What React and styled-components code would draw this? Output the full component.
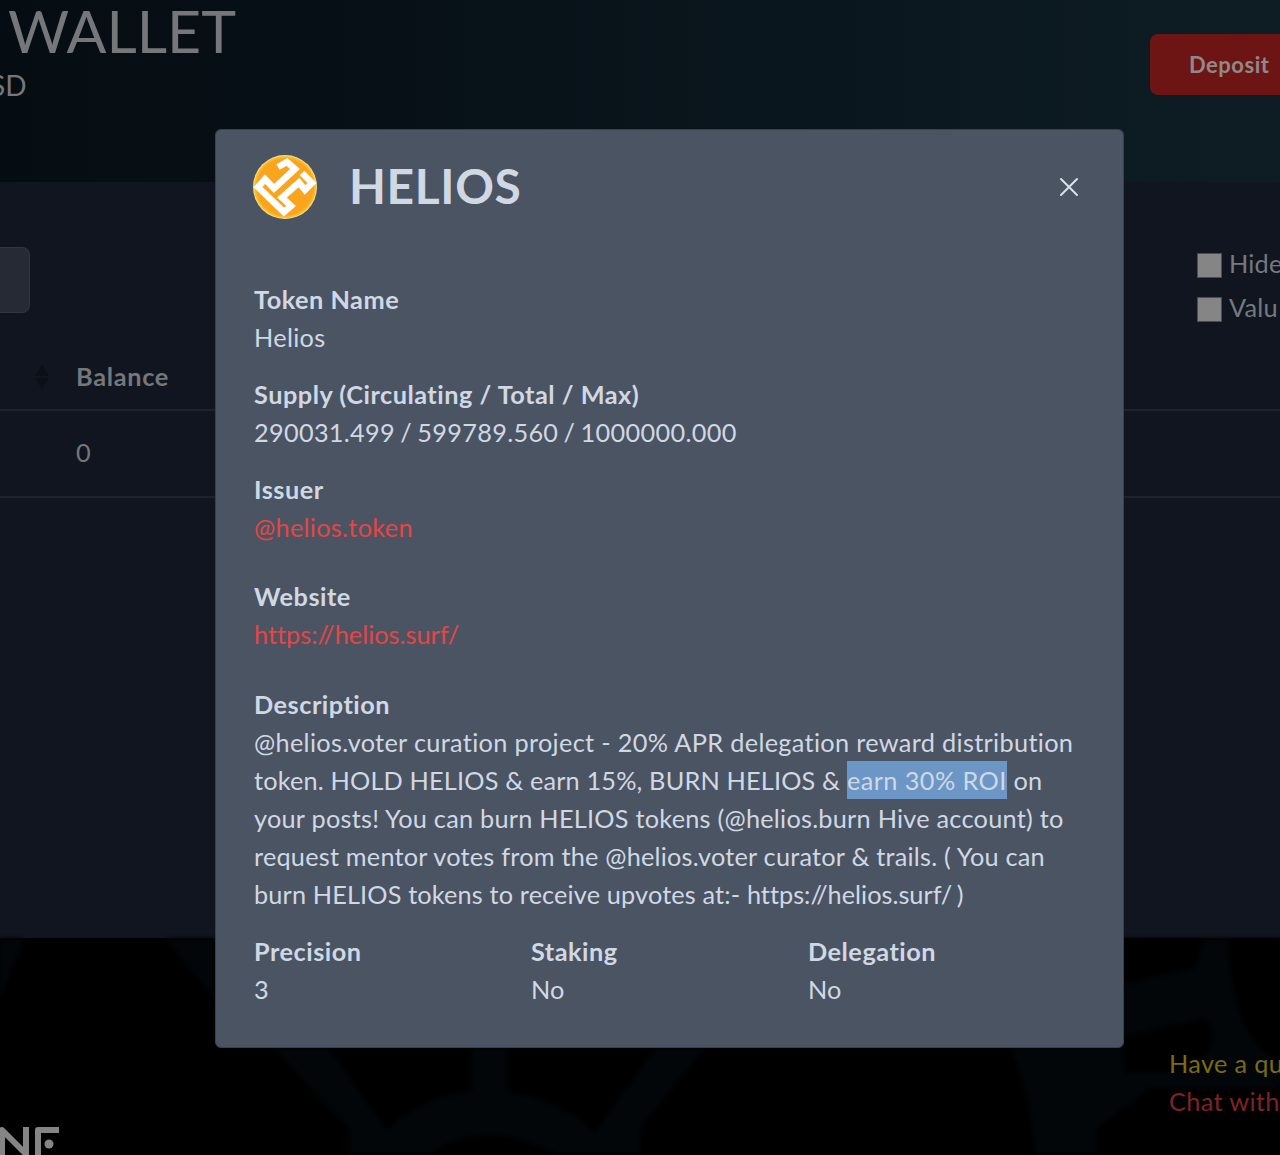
import React from 'react';
import styled, { createGlobalStyle } from 'styled-components';

const GlobalStyle = createGlobalStyle`
  body { margin: 0; overflow: hidden; }
  *, *::before, *::after { box-sizing: border-box; }
`;

const Page = styled.div`
  position: relative;
  width: 1280px;
  height: 1155px;
  overflow: hidden;
  background: #10151f;
  color: #75777b;
  font: 25.3px/38px Lato, sans-serif;
  font-variant-ligatures: none;
  white-space: nowrap;
`;

const Header = styled.header`
  display: flex;
  justify-content: space-between;
  height: 182px;
  background: linear-gradient(90deg, #060d12 0%, #071017 30%, #0c1a22 85%, #0e1c24 100%);
`;

const Heading = styled.div`
  display: flex;
  flex-direction: column;
`;

const Title = styled.h1`
  margin: -2px 0 2px 8px;
  font-size: 59px;
  line-height: 66px;
  font-weight: 400;
`;

const Currency = styled.div`
  margin-left: -10px;
  font-size: 28px;
`;

const DepositButton = styled.button`
  width: 170px;
  height: 61px;
  margin: 34px -40px 0 0;
  padding: 0 0 0 39px;
  border: 0;
  border-radius: 8px;
  background: #6d1515;
  color: #8f8a88;
  font: 700 22px/60px Lato, sans-serif;
  letter-spacing: 0.5px;
  text-align: left;
`;

const Main = styled.main`
  height: 756px;
`;

const Filters = styled.div`
  display: flex;
  justify-content: space-between;
  height: 174px;
  padding-top: 62px;
`;

const SearchBox = styled.div`
  width: 30px;
  height: 66px;
  margin-top: 3px;
  border: 1px solid #31363f;
  border-left: 0;
  border-radius: 0 8px 8px 0;
  background: #262a34;
`;

const Checks = styled.div`
  display: flex;
  flex-direction: column;
  gap: 6px;
  width: 83px;
`;

const Check = styled.label`
  display: flex;
  gap: 7px;
  color: #757980;
  letter-spacing: 0.2px;
`;

const CheckSquare = styled.span`
  flex: none;
  width: 25px;
  height: 25px;
  margin-top: 9px;
  border: 1px solid #4b4c50;
  background: #858585;
`;

const Row = styled.div`
  display: flex;
  align-items: center;
  height: ${({ $height }) => $height}px;
  padding-bottom: ${({ $head }) => ($head ? 14 : 4)}px;
  border-bottom: 2px solid #1d232d;
  font-weight: ${({ $head }) => ($head ? 700 : 400)};
  letter-spacing: ${({ $head }) => ($head ? 0.7 : 0)}px;
`;

const SortCell = styled.div`
  width: 76px;
  padding: 2px 0 0 35px;
  line-height: 0;
`;

const Footer = styled.footer`
  position: relative;
  height: 217px;
  background: #000;
`;

const Backdrop = styled.svg`
  position: absolute;
  inset: 0;
  filter: blur(2px);
`;

const FooterContent = styled.div`
  position: relative;
  display: flex;
  justify-content: space-between;
  height: 217px;
`;

const FooterLogo = styled.svg`
  align-self: flex-end;
`;

const Support = styled.div`
  width: 111px;
  padding-top: 106px;
  letter-spacing: 0.35px;
`;

const SupportLine = styled.div`
  color: ${({ $link }) => ($link ? '#7d2328' : '#7c6a14')};
`;

const Overlay = styled.div`
  position: absolute;
  inset: 0;
  display: flex;
  align-items: flex-start;
  padding: 129px 0 0 215px;
`;

const Modal = styled.div`
  width: 909px;
  height: 919px;
  padding: 24px 38px 0 37px;
  border: 1px solid #364252;
  border-radius: 6px;
  background: #4b5462;
  color: #d0d8e4;
`;

const ModalHeader = styled.div`
  display: flex;
  align-items: center;
  height: 65px;
  margin-bottom: 61px;
`;

const ModalTitle = styled.h2`
  flex: 1;
  margin: -2px 0 0 32px;
  font-size: 48px;
  line-height: 64px;
  letter-spacing: 0.6px;
`;

const CloseIcon = styled.svg`
  margin-right: 6px;
`;

const ModalBody = styled.div`
  padding-left: 1px;
`;

const Field = styled.div`
  margin-bottom: ${({ $gap }) => $gap || 19}px;
`;

const Label = styled.div`
  font-weight: 700;
  letter-spacing: 0.5px;
`;

const Line = styled.div`
  letter-spacing: ${({ $spacing }) => $spacing || 0}px;
  word-spacing: ${({ $word }) => $word || 0}px;
`;

const Link = styled(Line)`
  color: #e64545;
`;

const Selected = styled.span`
  display: inline-block;
  height: 38px;
  background: #6b96c5;
  letter-spacing: 0.42px;
`;

const Url = styled.span`
  letter-spacing: 0;
  word-spacing: -2px;
`;

const Columns = styled.div`
  display: grid;
  grid-template-columns: repeat(3, 277px);
`;

const HeliosLogo = () => (
  <svg width="64" height="64" viewBox="0 0 64 64">
    <defs>
      <radialGradient id="coin">
        <stop offset="0.88" stopColor="#fba51f" />
        <stop offset="0.95" stopColor="#fdc02c" />
        <stop offset="1" stopColor="#fde9a0" />
      </radialGradient>
    </defs>
    <circle cx="32" cy="32" r="32" fill="url(#coin)" />
    <g fill="none" stroke="#fff" strokeWidth="6.5">
      <path d="M25 12L34 7L42 14L21 33.5L12 24L5 32L31 57L38 51L29 42.5L46 27.5L52 35L59 28L49 18" />
    </g>
  </svg>
);

const SortIcon = () => (
  <svg width="14" height="24" viewBox="0 0 14 24" fill="#0a0f18">
    <path d="M0 11L7 0L14 11ZM0 13L7 24L14 13Z" />
  </svg>
);

const FooterShapes = () => (
  <Backdrop width="1280" height="217" viewBox="0 0 1280 217" fill="#020609">
    <path d="M0 0H24L0 60ZM165 0H215V60ZM272 109H328L386 192Q430 155 472 154V109H508V154Q565 163 595 195L656 109H706L640 190V217H558Q520 197 490 197Q455 197 430 217H350V190Z" />
    <path d="M1010 109L1124 0H1280V217H1035Q1030 150 1010 109Z" />
    <g fill="#000">
      <path d="M1124 0H1205L1195 30L1124 46ZM1228 0Q1230 100 1280 125V0Z" />
      <path d="M1124 98L1205 80Q1222 95 1205 118L1170 135H1124ZM1097 217V190L1150 150H1280V217Z" />
    </g>
  </Backdrop>
);

const App = () => (
  <Page>
    <GlobalStyle />
    <Header>
      <Heading>
        <Title>WALLET</Title>
        <Currency>SD</Currency>
      </Heading>
      <DepositButton>Deposit</DepositButton>
    </Header>
    <Main>
      <Filters>
        <SearchBox />
        <Checks>
          <Check><CheckSquare />Hide</Check>
          <Check><CheckSquare />Valu</Check>
        </Checks>
      </Filters>
      <Row $height={55} $head>
        <SortCell><SortIcon /></SortCell>
        Balance
      </Row>
      <Row $height={87}>
        <SortCell />
        0
      </Row>
    </Main>
    <Footer>
      <FooterShapes />
      <FooterContent>
        <FooterLogo width="60" height="30" viewBox="0 0 60 30" fill="none" stroke="#858585" strokeWidth="6" strokeLinejoin="round">
          <path d="M2 30V5L26 29V2M38 30V5H59" />
          <circle cx="49" cy="19" r="4.5" fill="#858585" stroke="none" />
        </FooterLogo>
        <Support>
          <SupportLine>Have a qu</SupportLine>
          <SupportLine $link>Chat with</SupportLine>
        </Support>
      </FooterContent>
    </Footer>
    <Overlay>
      <Modal>
        <ModalHeader>
          <HeliosLogo />
          <ModalTitle>HELIOS</ModalTitle>
          <CloseIcon width="20" height="20" viewBox="0 0 20 20" stroke="#d8e0ea" strokeWidth="2" strokeLinecap="round">
            <path d="M2 2L18 18M18 2L2 18" />
          </CloseIcon>
        </ModalHeader>
        <ModalBody>
          <Field>
            <Label>Token Name</Label>
            <Line $spacing={0.3}>Helios</Line>
          </Field>
          <Field>
            <Label>Supply (Circulating / Total / Max)</Label>
            <Line $spacing={0.3} $word={-1.5}>290031.499 / 599789.560 / 1000000.000</Line>
          </Field>
          <Field $gap={31}>
            <Label>Issuer</Label>
            <Link $spacing={0.3}>@helios.token</Link>
          </Field>
          <Field $gap={32}>
            <Label>Website</Label>
            <Link>https://helios.surf/</Link>
          </Field>
          <Field>
            <Label>Description</Label>
            <Line $spacing={0.32}>@helios.voter curation project - 20% APR delegation reward distribution</Line>
            <Line $spacing={0.16}>
              {'token. HOLD HELIOS & earn 15%, BURN HELIOS & '}
              <Selected>earn 30% ROI</Selected>
              {' on'}
            </Line>
            <Line $spacing={0.24}>your posts! You can burn HELIOS tokens (@helios.burn Hive account) to</Line>
            <Line $spacing={0.21}>{'request mentor votes from the @helios.voter curator & trails. ( You can'}</Line>
            <Line $spacing={0.14}>
              {'burn HELIOS tokens to receive upvotes at:- '}
              <Url>https://helios.surf/ )</Url>
            </Line>
          </Field>
          <Columns>
            <Field>
              <Label>Precision</Label>
              <Line>3</Line>
            </Field>
            <Field>
              <Label>Staking</Label>
              <Line>No</Line>
            </Field>
            <Field>
              <Label>Delegation</Label>
              <Line>No</Line>
            </Field>
          </Columns>
        </ModalBody>
      </Modal>
    </Overlay>
  </Page>
);

export default App;
